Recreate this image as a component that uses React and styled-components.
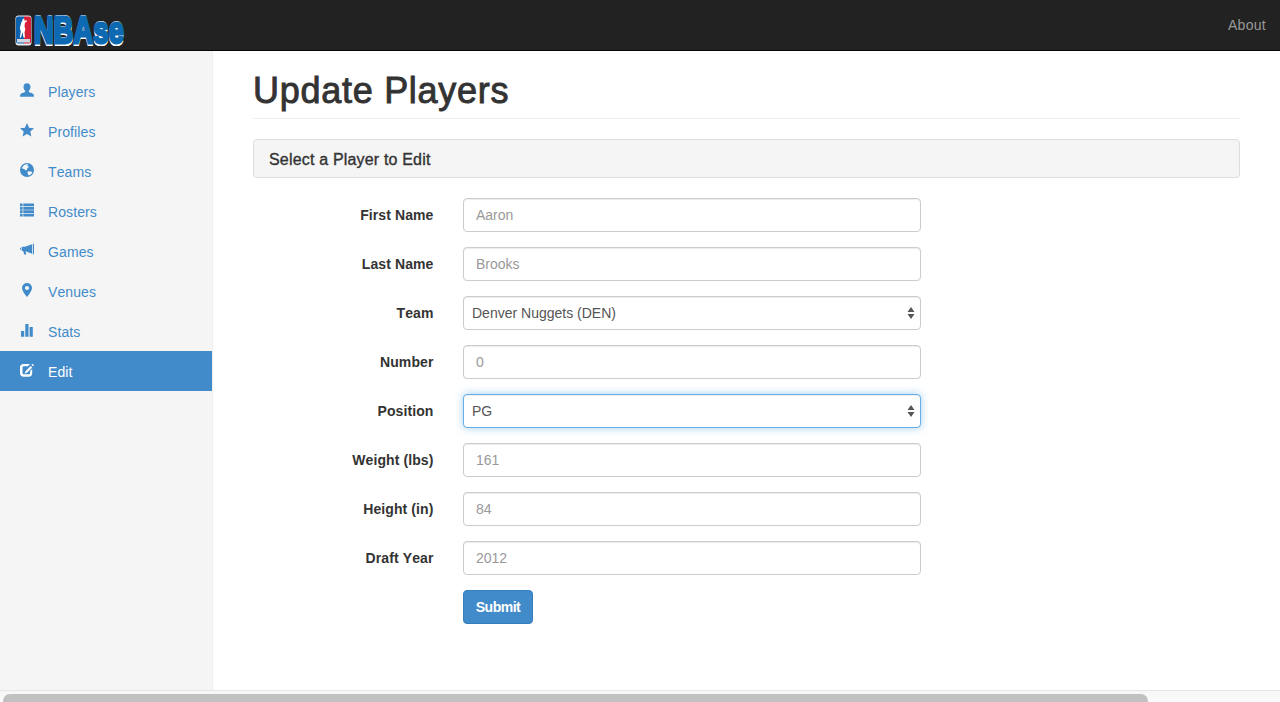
import React from 'react';
import styled, { createGlobalStyle } from 'styled-components';

const GlobalStyle = createGlobalStyle`
  html, body { margin: 0; padding: 0; height: 100%; overflow: hidden; }
  body {
    font-family: "Liberation Sans", Arial, sans-serif;
    font-size: 14px;
    font-kerning: none;
    color: #333;
    background: #fff;
  }
  * { box-sizing: border-box; }
`;

const Page = styled.div`
  display: flex;
  flex-direction: column;
  height: 702px;
`;

const Navbar = styled.header`
  display: flex;
  align-items: flex-start;
  justify-content: space-between;
  height: 51px;
  flex: none;
  background: #222;
  border-bottom: 1px solid #080808;
  padding: 0 14px 0 15px;
`;

const Brand = styled.a`
  display: flex;
  align-items: flex-start;
  gap: 2px;
  padding-top: 15px;
  height: 50px;
  overflow: hidden;
`;

const BrandText = styled.span`
  display: block;
  width: 92px;
  margin-top: -3px;
  font-size: 37px;
  line-height: 38px;
  font-weight: 700;
  letter-spacing: 0.4px;
  color: #0e69b3;
  -webkit-text-stroke: 3px #0e69b3;
  text-shadow: 0 -2px 0 #fff, 0 3px 0 #fff, 1px 3px 0 #fff, -1px 3px 0 #fff;
  transform: scaleX(0.73);
  transform-origin: left top;
  white-space: nowrap;
`;

const NavLink = styled.a`
  color: #999;
  font-size: 14px;
  line-height: 20px;
  letter-spacing: 0.3px;
  padding-top: 15px;
`;

const Body = styled.div`
  display: flex;
  flex: 1;
  min-height: 0;
`;

const Sidebar = styled.nav`
  width: 213px;
  flex: none;
  background: #f5f5f5;
  border-right: 1px solid #eee;
  padding-top: 20px;
`;

const SideItem = styled.a`
  display: flex;
  align-items: center;
  height: 40px;
  padding: 2px 0 0 20px;
  color: ${p => (p.$active ? '#fff' : '#428bca')};
  background: ${p => (p.$active ? '#428bca' : 'transparent')};
  line-height: 20px;
  letter-spacing: 0.1px;
`;

const SideIcon = styled.svg`
  width: 14px;
  height: 14px;
  margin-right: 14px;
  margin-top: -4px;
  flex: none;
  fill: currentColor;
`;

const Main = styled.main`
  flex: 1;
  padding: 0 40px;
`;

const PageHeader = styled.div`
  margin-top: 20px;
  padding-bottom: 9px;
  border-bottom: 1px solid #eee;
  height: 48px;
`;

const Title = styled.h1`
  margin: 0;
  font-size: 36px;
  line-height: 39px;
  font-weight: 400;
  color: #333;
  -webkit-text-stroke: 0.9px #333;
  letter-spacing: 0.72px;
`;

const Panel = styled.div`
  margin-top: 20px;
  height: 39px;
  background: #f5f5f5;
  border: 1px solid #ddd;
  border-radius: 4px;
  padding: 2px 15px 0;
  display: flex;
  align-items: center;
  font-size: 16px;
  letter-spacing: 0.18px;
  color: #333;
  -webkit-text-stroke: 0.35px #333;
`;

const Form = styled.form`
  display: flex;
  flex-direction: column;
  gap: 15px;
  margin-top: 20px;
`;

const Row = styled.div`
  display: grid;
  grid-template-columns: 180.5px 458px;
  column-gap: 29.500px;
  align-items: center;
`;

const Label = styled.label`
  text-align: right;
  font-weight: 700;
  font-size: 14px;
  line-height: 20px;
  letter-spacing: 0.1px;
  color: #333;
`;

const Input = styled.input`
  display: block;
  width: 100%;
  height: 34px;
  padding: 6px 12px;
  font: inherit;
  font-kerning: none;
  color: #555;
  background: #fff;
  border: 1px solid #ccc;
  border-radius: 4px;
  box-shadow: inset 0 1px 1px rgba(0, 0, 0, 0.075);
  outline: none;
  &::placeholder { color: #999; opacity: 1; }
`;

const SelectWrap = styled.div`
  position: relative;
`;

const Select = styled.select`
  display: block;
  width: 100%;
  height: 34px;
  padding: 6px 8px;
  font: inherit;
  font-kerning: none;
  color: #555;
  background: #fff;
  appearance: none;
  border: 1px solid ${p => (p.$focused ? '#66afe9' : '#ccc')};
  border-radius: 4px;
  outline: none;
  box-shadow: ${p => (p.$focused
    ? 'inset 0 1px 1px rgba(0,0,0,.075), 0 0 8px rgba(102,175,233,.6)'
    : 'inset 0 1px 1px rgba(0,0,0,.075)')};
`;

const Arrows = styled.svg`
  position: absolute;
  right: 6px;
  top: 11px;
  width: 8px;
  height: 12px;
  fill: #555;
  pointer-events: none;
`;

const SubmitButton = styled.button`
  grid-column: 2;
  justify-self: start;
  width: 70px;
  height: 34px;
  font: inherit;
  font-weight: 700;
  font-kerning: none;
  letter-spacing: -0.5px;
  color: #fff;
  background: #428bca;
  border: 1px solid #357ebd;
  border-radius: 4px;
  padding: 0;
`;

const ScrollTrack = styled.div`
  flex: none;
  height: 12px;
  padding: 3px 132px 0 3px;
  overflow: hidden;
  background: linear-gradient(#f6f6f6, #fcfcfc);
  border-top: 1px solid #e6e6e6;
`;

const ScrollThumb = styled.div`
  height: 14px;
  background: #c1c1c1;
  border-radius: 7px;
`;

const icons = {
  user: <path d="M7 0.300c2.200 0 3.500 1.500 3.500 3.600 0 1.500-.6 2.900-1.600 3.800v1.100c0 .7 2.800 1 4.100 2 .6.5 1 1.200 1 2.900H0c0-1.700.4-2.400 1-2.900 1.300-1 4.100-1.300 4.100-2V7.700C4.100 6.800 3.500 5.400 3.500 3.900 3.500 1.800 4.800.3 7 .3z" />,
  star: <path d="M7 0l2.100 4.700 4.900.5-3.700 3.300 1.100 5L7 10.900l-4.400 2.600 1.100-5L0 5.200l4.900-.5z" />,
  globe: <path fillRule="evenodd" d="M7 0a7 7 0 1 0 0 14A7 7 0 0 0 7 0zM5.300 1.400c1-.3 2.200-.3 3 0-.2.7-1 .8-1.200 1.400.5.600 1.200.2 1.600.7.200.9-.7 1.100-1.100 1.600-.7.500-.3 1.500-.9 2.100C6 7.500 5 7 4.600 6.300 3.800 5.800 2.500 5.700 1.900 5 2.500 3.300 3.700 2 5.300 1.400zM8.200 8.200c1-.2 1.900.2 2.700.3.600.3 1.200.4 1.400.9-.7 1.400-1.900 2.500-3.400 3-.6-.4-.9-1.200-1.200-1.900-.2-.8-.2-1.800.5-2.300z" />,
  list: <path d="M0 .5h2.600v2.800H0zM3.300.5H14v2.800H3.300zM0 3.900h2.600v2.800H0zM3.300 3.900H14v2.800H3.300zM0 7.300h2.600v2.800H0zM3.300 7.300H14v2.800H3.300zM0 10.700h2.600v2.800H0zM3.300 10.700H14v2.800H3.300z" />,
  bullhorn: <path d="M14 .8h-1.200v10.400H14zM12 1.200L4.900 3.800H1.700v4.200h1.500l1 3.500h2.100L5.600 8.300 12 10.800zM0 4.800h.9v2H0z" />,
  marker: <path fillRule="evenodd" d="M7 0a5 5 0 0 0-5 5c0 3.400 5 9 5 9s5-5.600 5-9a5 5 0 0 0-5-5zm0 2.900a2.100 2.100 0 1 1 0 4.200 2.100 2.100 0 0 1 0-4.200z" />,
  stats: <path d="M1 8h3.200v5.800H1zM5.300 1h3.200v12.800H5.300zM9.600 4h3.200v9.800H9.600z" />,
  edit: <path fillRule="evenodd" d="M3.500 1H10L7.900 3.200H3.900c-.8 0-1.400.6-1.400 1.400v5.300c0 .8.600 1.400 1.400 1.400h4.800c.8 0 1.400-.6 1.400-1.400V8l2.100-2.100v4.400c0 2.100-1.400 3.500-3.400 3.500H3.600C1.500 13.800 0 12.400 0 10.300V4.500C0 2.400 1.400 1 3.500 1zM10.700 3l1.500 1.500-5.200 5.200-2.300.8.800-2.300zM12.400.7L14 2.300l-1 1-1.600-1.600z" />,
};

const navItems = [
  { label: 'Players', icon: 'user' },
  { label: 'Profiles', icon: 'star' },
  { label: 'Teams', icon: 'globe' },
  { label: 'Rosters', icon: 'list' },
  { label: 'Games', icon: 'bullhorn' },
  { label: 'Venues', icon: 'marker' },
  { label: 'Stats', icon: 'stats' },
  { label: 'Edit', icon: 'edit', active: true },
];

const fields = [
  { label: 'First Name', placeholder: 'Aaron' },
  { label: 'Last Name', placeholder: 'Brooks' },
  { label: 'Team', options: ['Denver Nuggets (DEN)'] },
  { label: 'Number', placeholder: '0' },
  { label: 'Position', options: ['PG'], focused: true },
  { label: 'Weight (lbs)', placeholder: '161' },
  { label: 'Height (in)', placeholder: '84' },
  { label: 'Draft Year', placeholder: '2012' },
];

function NbaShield() {
  return (
    <svg width="17" height="31" viewBox="0 0 17 31">
      <rect x="0.500" y="0.500" width="16" height="30" rx="3" fill="#e8eef4" />
      <path d="M3 1.500h6v27H3a2 2 0 0 1-2-2v-23a2 2 0 0 1 2-2z" fill="#0e62ad" />
      <path d="M9 1.500h5a2 2 0 0 1 2 2v23a2 2 0 0 1-2 2H9z" fill="#d8203a" />
      <path d="M8 3.500c1.200 0 1.800 1 1.500 2.200l2-.5.500 1-2 1.500-.5 3 .8 4-.8 2.500.5 5.300H8.400L7.600 17 6 22.500H4.800l1-6-1-3.500 1.500-5.500.8-1.500z" fill="#fff" />
      <rect x="2" y="24" width="13" height="3.500" fill="#cfd8e2" />
    </svg>
  );
}

export default function App() {
  return (
    <Page>
      <GlobalStyle />
      <Navbar>
        <Brand>
          <NbaShield />
          <BrandText>NBAse</BrandText>
        </Brand>
        <NavLink>About</NavLink>
      </Navbar>
      <Body>
        <Sidebar>
          {navItems.map(item => (
            <SideItem key={item.label} $active={item.active}>
              <SideIcon viewBox="0 0 14 14">{icons[item.icon]}</SideIcon>
              {item.label}
            </SideItem>
          ))}
        </Sidebar>
        <Main>
          <PageHeader>
            <Title>Update Players</Title>
          </PageHeader>
          <Panel>Select a Player to Edit</Panel>
          <Form onSubmit={e => e.preventDefault()}>
            {fields.map(field => (
              <Row key={field.label}>
                <Label>{field.label}</Label>
                {field.options ? (
                  <SelectWrap>
                    <Select $focused={field.focused}>
                      {field.options.map(o => <option key={o}>{o}</option>)}
                    </Select>
                    <Arrows viewBox="0 0 8 12">
                      <path d="M4 0l3.500 5H.5zM4 12L.5 7h7z" />
                    </Arrows>
                  </SelectWrap>
                ) : (
                  <Input placeholder={field.placeholder} />
                )}
              </Row>
            ))}
            <Row>
              <SubmitButton type="submit">Submit</SubmitButton>
            </Row>
          </Form>
        </Main>
      </Body>
      <ScrollTrack>
        <ScrollThumb />
      </ScrollTrack>
    </Page>
  );
}
